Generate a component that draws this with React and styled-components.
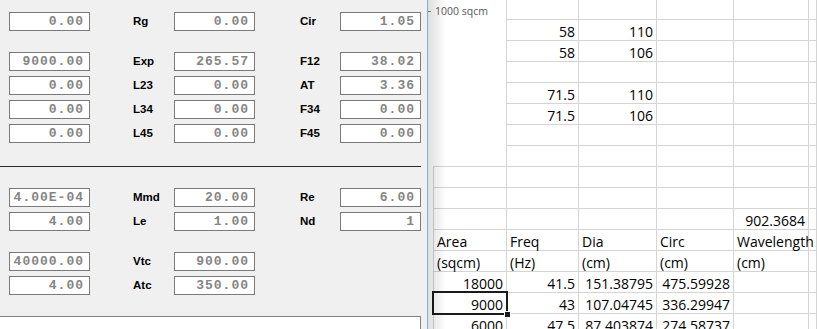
import React from 'react';
import styled, { createGlobalStyle } from 'styled-components';

const GlobalStyle = createGlobalStyle`
    html, body {
        margin: 0;
        padding: 0;
        background: #ffffff;
    }
`;

const Screen = styled.div`
    display: flex;
    width: 817px;
    height: 329px;
    overflow: hidden;
`;

const Panel = styled.div`
    width: 428px;
    flex: none;
    display: flex;
    flex-direction: column;
    padding-top: 12px;
    box-sizing: border-box;
    background: #f0f0f0;
    border-right: 1px solid #84abd2;
`;

const Group = styled.div`
    display: flex;
    flex-direction: column;
    gap: 5px;
    margin-top: ${(props) => props.$top || 0}px;
`;

const FieldRow = styled.div`
    display: grid;
    grid-template-columns: 81px 84px 81px 85px 81px;
    padding-left: 9px;
    height: 19px;
`;

const ValueBox = styled.div`
    box-sizing: border-box;
    height: 19px;
    border: 1px solid #7a7a7a;
    background: #ffffff;
    padding-right: 5px;
    text-align: right;
    font-family: "Liberation Mono", monospace;
    font-weight: bold;
    font-size: 13px;
    line-height: 17px;
    letter-spacing: 1px;
    color: #858585;
    white-space: nowrap;
    overflow: hidden;
`;

const FieldLabel = styled.div`
    padding-left: ${(props) => props.$pad}px;
    font-family: "Liberation Sans", Arial, sans-serif;
    font-weight: bold;
    font-size: 11.5px;
    line-height: 19px;
    color: #000000;
`;

const Separator = styled.div`
    width: 421px;
    height: 1px;
    background: #2b2b2b;
    margin-top: 23px;
`;

const NotesBox = styled.div`
    flex: 1;
    width: 421px;
    margin-top: 21px;
    box-sizing: border-box;
    background: #ffffff;
    border-top: 1px solid #828282;
    border-right: 1px solid #828282;
`;

const Sheet = styled.div`
    position: relative;
    flex: 1;
    background: #ffffff;
    padding-left: 5px;
    overflow: hidden;
`;

const Grid = styled.div`
    display: grid;
    grid-template-columns: 74px 72px 78px 77px 75px 1fr;
    grid-template-rows: 20px repeat(15, 21px);
`;

const Cell = styled.div`
    box-sizing: border-box;
    display: flex;
    align-items: flex-end;
    justify-content: ${(props) => (props.$right ? 'flex-end' : 'flex-start')};
    padding: 0 3px 0 ${(props) => (props.$first ? 3 : 3)}px;
    border-right: 1px solid #d4d4d4;
    border-bottom: 1px solid #d4d4d4;
    border-left: ${(props) => (props.$first ? '1px solid #d4d4d4' : 'none')};
    font-family: "Open Sans", "Noto Sans", sans-serif;
    font-size: 14px;
    line-height: 17px;
    color: #000000;
    white-space: nowrap;
    overflow: visible;
    position: relative;
`;

const ChartPiece = styled.div`
    position: absolute;
    left: 0;
    top: 0;
    width: 78px;
    height: 166px;
    background: #ffffff;
    display: flex;
    align-items: center;
    align-content: flex-start;
    gap: 4px;
    padding-top: 4px;
    height: 166px;
    box-sizing: border-box;
    align-items: flex-start;
    font-family: "Open Sans", "Noto Sans", sans-serif;
    font-size: 10.5px;
    line-height: 14px;
    color: #595959;
    white-space: nowrap;
`;

const Tick = styled.span`
    display: inline-block;
    width: 3px;
    height: 1px;
    margin-top: 7px;
    background: #8a8a8a;
`;

const Shade = styled.div`
    position: absolute;
    left: 0;
    top: 0;
    bottom: 0;
    width: 18px;
    background: linear-gradient(to right, rgba(0, 0, 0, 0.13), rgba(0, 0, 0, 0));
    pointer-events: none;
`;

const Selection = styled.div`
    position: absolute;
    left: 4px;
    top: 291px;
    width: 76px;
    height: 24px;
    box-sizing: border-box;
    border: 2px solid #1a1a1a;
    pointer-events: none;

    &::after {
        content: '';
        position: absolute;
        right: -5px;
        bottom: -5px;
        width: 5px;
        height: 5px;
        background: #1a1a1a;
        border: 1px solid #ffffff;
    }
`;

const groups = [
    {
        top: 0,
        rows: [['0.00', 'Rg', '0.00', 'Cir', '1.05']],
    },
    {
        top: 21,
        rows: [
            ['9000.00', 'Exp', '265.57', 'F12', '38.02'],
            ['0.00', 'L23', '0.00', 'AT', '3.36'],
            ['0.00', 'L34', '0.00', 'F34', '0.00'],
            ['0.00', 'L45', '0.00', 'F45', '0.00'],
        ],
    },
];

const lowerGroups = [
    {
        top: 21,
        rows: [
            ['4.00E-04', 'Mmd', '20.00', 'Re', '6.00'],
            ['4.00', 'Le', '1.00', 'Nd', '1'],
        ],
    },
    {
        top: 21,
        rows: [
            ['40000.00', 'Vtc', '900.00'],
            ['4.00', 'Atc', '350.00'],
        ],
    },
];

// [text, right aligned]
const n = (t) => [t, true];
const s = (t) => [t, false];
const E = null;

const sheetRows = [
    [E, E, E, E, E, E],
    [E, n('58'), n('110'), E, E, E],
    [E, n('58'), n('106'), E, E, E],
    [E, E, E, E, E, E],
    [E, n('71.5'), n('110'), E, E, E],
    [E, n('71.5'), n('106'), E, E, E],
    [E, E, E, E, E, E],
    [E, E, E, E, E, E],
    [E, E, E, E, E, E],
    [E, E, E, E, E, E],
    [E, E, E, E, n('902.3684'), E],
    [s('Area'), s('Freq'), s('Dia'), s('Circ'), s('Wavelength'), E],
    [s('(sqcm)'), s('(Hz)'), s('(cm)'), s('(cm)'), s('(cm)'), E],
    [n('18000'), n('41.5'), n('151.38795'), n('475.59928'), E, E],
    [n('9000'), n('43'), n('107.04745'), n('336.29947'), E, E],
    [n('6000'), n('47.5'), n('87.403874'), n('274.58737'), E, E],
];

function Fields({ group }) {
    return (
        <Group $top={group.top}>
            {group.rows.map((row, i) => (
                <FieldRow key={i}>
                    <ValueBox>{row[0]}</ValueBox>
                    <FieldLabel $pad={43}>{row[1]}</FieldLabel>
                    <ValueBox>{row[2]}</ValueBox>
                    {row[3] && <FieldLabel $pad={45}>{row[3]}</FieldLabel>}
                    {row[4] && <ValueBox>{row[4]}</ValueBox>}
                </FieldRow>
            ))}
        </Group>
    );
}

export default function App() {
    return (
        <>
            <GlobalStyle />
            <Screen>
                <Panel>
                    {groups.map((g, i) => (
                        <Fields key={i} group={g} />
                    ))}
                    <Separator />
                    {lowerGroups.map((g, i) => (
                        <Fields key={i} group={g} />
                    ))}
                    <NotesBox />
                </Panel>
                <Sheet>
                    <Grid>
                        {sheetRows.map((row, r) =>
                            row.map((cell, c) => (
                                <Cell key={r + '-' + c} $first={c === 0} $right={cell ? cell[1] : false}>
                                    {cell ? cell[0] : ''}
                                </Cell>
                            ))
                        )}
                    </Grid>
                    <ChartPiece>
                        <Tick />
                        <span>1000 sqcm</span>
                    </ChartPiece>
                    <Selection />
                    <Shade />
                </Sheet>
            </Screen>
        </>
    );
}
